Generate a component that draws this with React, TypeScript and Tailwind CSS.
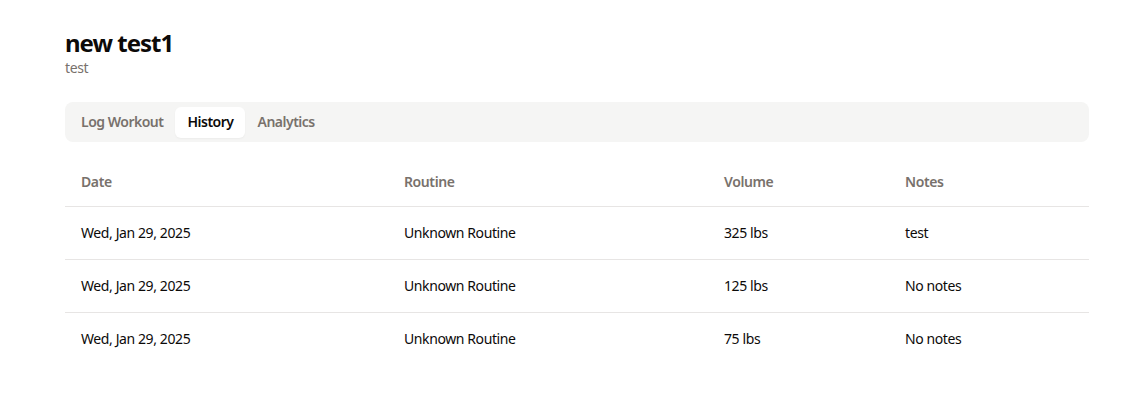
import { useState } from 'react';

const workouts = [
  { date: 'Wed, Jan 29, 2025', routine: 'Unknown Routine', volume: '325 lbs', notes: 'test' },
  { date: 'Wed, Jan 29, 2025', routine: 'Unknown Routine', volume: '125 lbs', notes: 'No notes' },
  { date: 'Wed, Jan 29, 2025', routine: 'Unknown Routine', volume: '75 lbs', notes: 'No notes' },
];

const tabs = ['Log Workout', 'History', 'Analytics'];

export default function App() {
  const [activeTab, setActiveTab] = useState('History');

  return (
    <div
      className="min-h-screen bg-white text-[#0c0a09]"
      style={{ fontFamily: '"Noto Sans", "Open Sans", sans-serif' }}
    >
      <div className="pl-[65px] pt-[28px]">
        <div className="w-[1024px]">
          <h1 className="text-2xl font-bold leading-[30px] tracking-[-1px]">new test1</h1>
          <p className="text-sm leading-5 tracking-[-0.4px] text-[#78716c]">test</p>

          <div className="mt-[24px] flex h-10 items-center rounded-lg bg-[#f5f5f4] px-1">
            {tabs.map((tab) => (
              <button
                key={tab}
                onClick={() => setActiveTab(tab)}
                className={
                  activeTab === tab
                    ? 'h-[31px] rounded-md bg-white px-3 text-sm font-semibold tracking-[-0.5px] text-[#0c0a09] shadow-[0_1px_2px_rgba(0,0,0,0.04)]'
                    : 'h-[31px] rounded-md px-3 text-sm font-semibold tracking-[-0.5px] text-[#78716c]'
                }
              >
                {tab}
              </button>
            ))}
          </div>

          {activeTab === 'History' && (
            <table className="mt-4 w-full table-fixed border-collapse text-sm tracking-[-0.4px]">
              <thead>
                <tr className="border-b border-[#e7e5e4]">
                  <th className="h-12 w-[323px] px-4 text-left font-semibold text-[#78716c]">Date</th>
                  <th className="h-12 w-[320px] px-4 text-left font-semibold text-[#78716c]">Routine</th>
                  <th className="h-12 w-[181px] px-4 text-left font-semibold text-[#78716c]">Volume</th>
                  <th className="h-12 px-4 text-left font-semibold text-[#78716c]">Notes</th>
                </tr>
              </thead>
              <tbody>
                {workouts.map((w, i) => (
                  <tr
                    key={i}
                    className={i < workouts.length - 1 ? 'border-b border-[#e7e5e4]' : ''}
                  >
                    <td className="h-[53px] px-4">{w.date}</td>
                    <td className="h-[53px] px-4">{w.routine}</td>
                    <td className="h-[53px] px-4">{w.volume}</td>
                    <td className="h-[53px] px-4">{w.notes}</td>
                  </tr>
                ))}
              </tbody>
            </table>
          )}
        </div>
      </div>
    </div>
  );
}
